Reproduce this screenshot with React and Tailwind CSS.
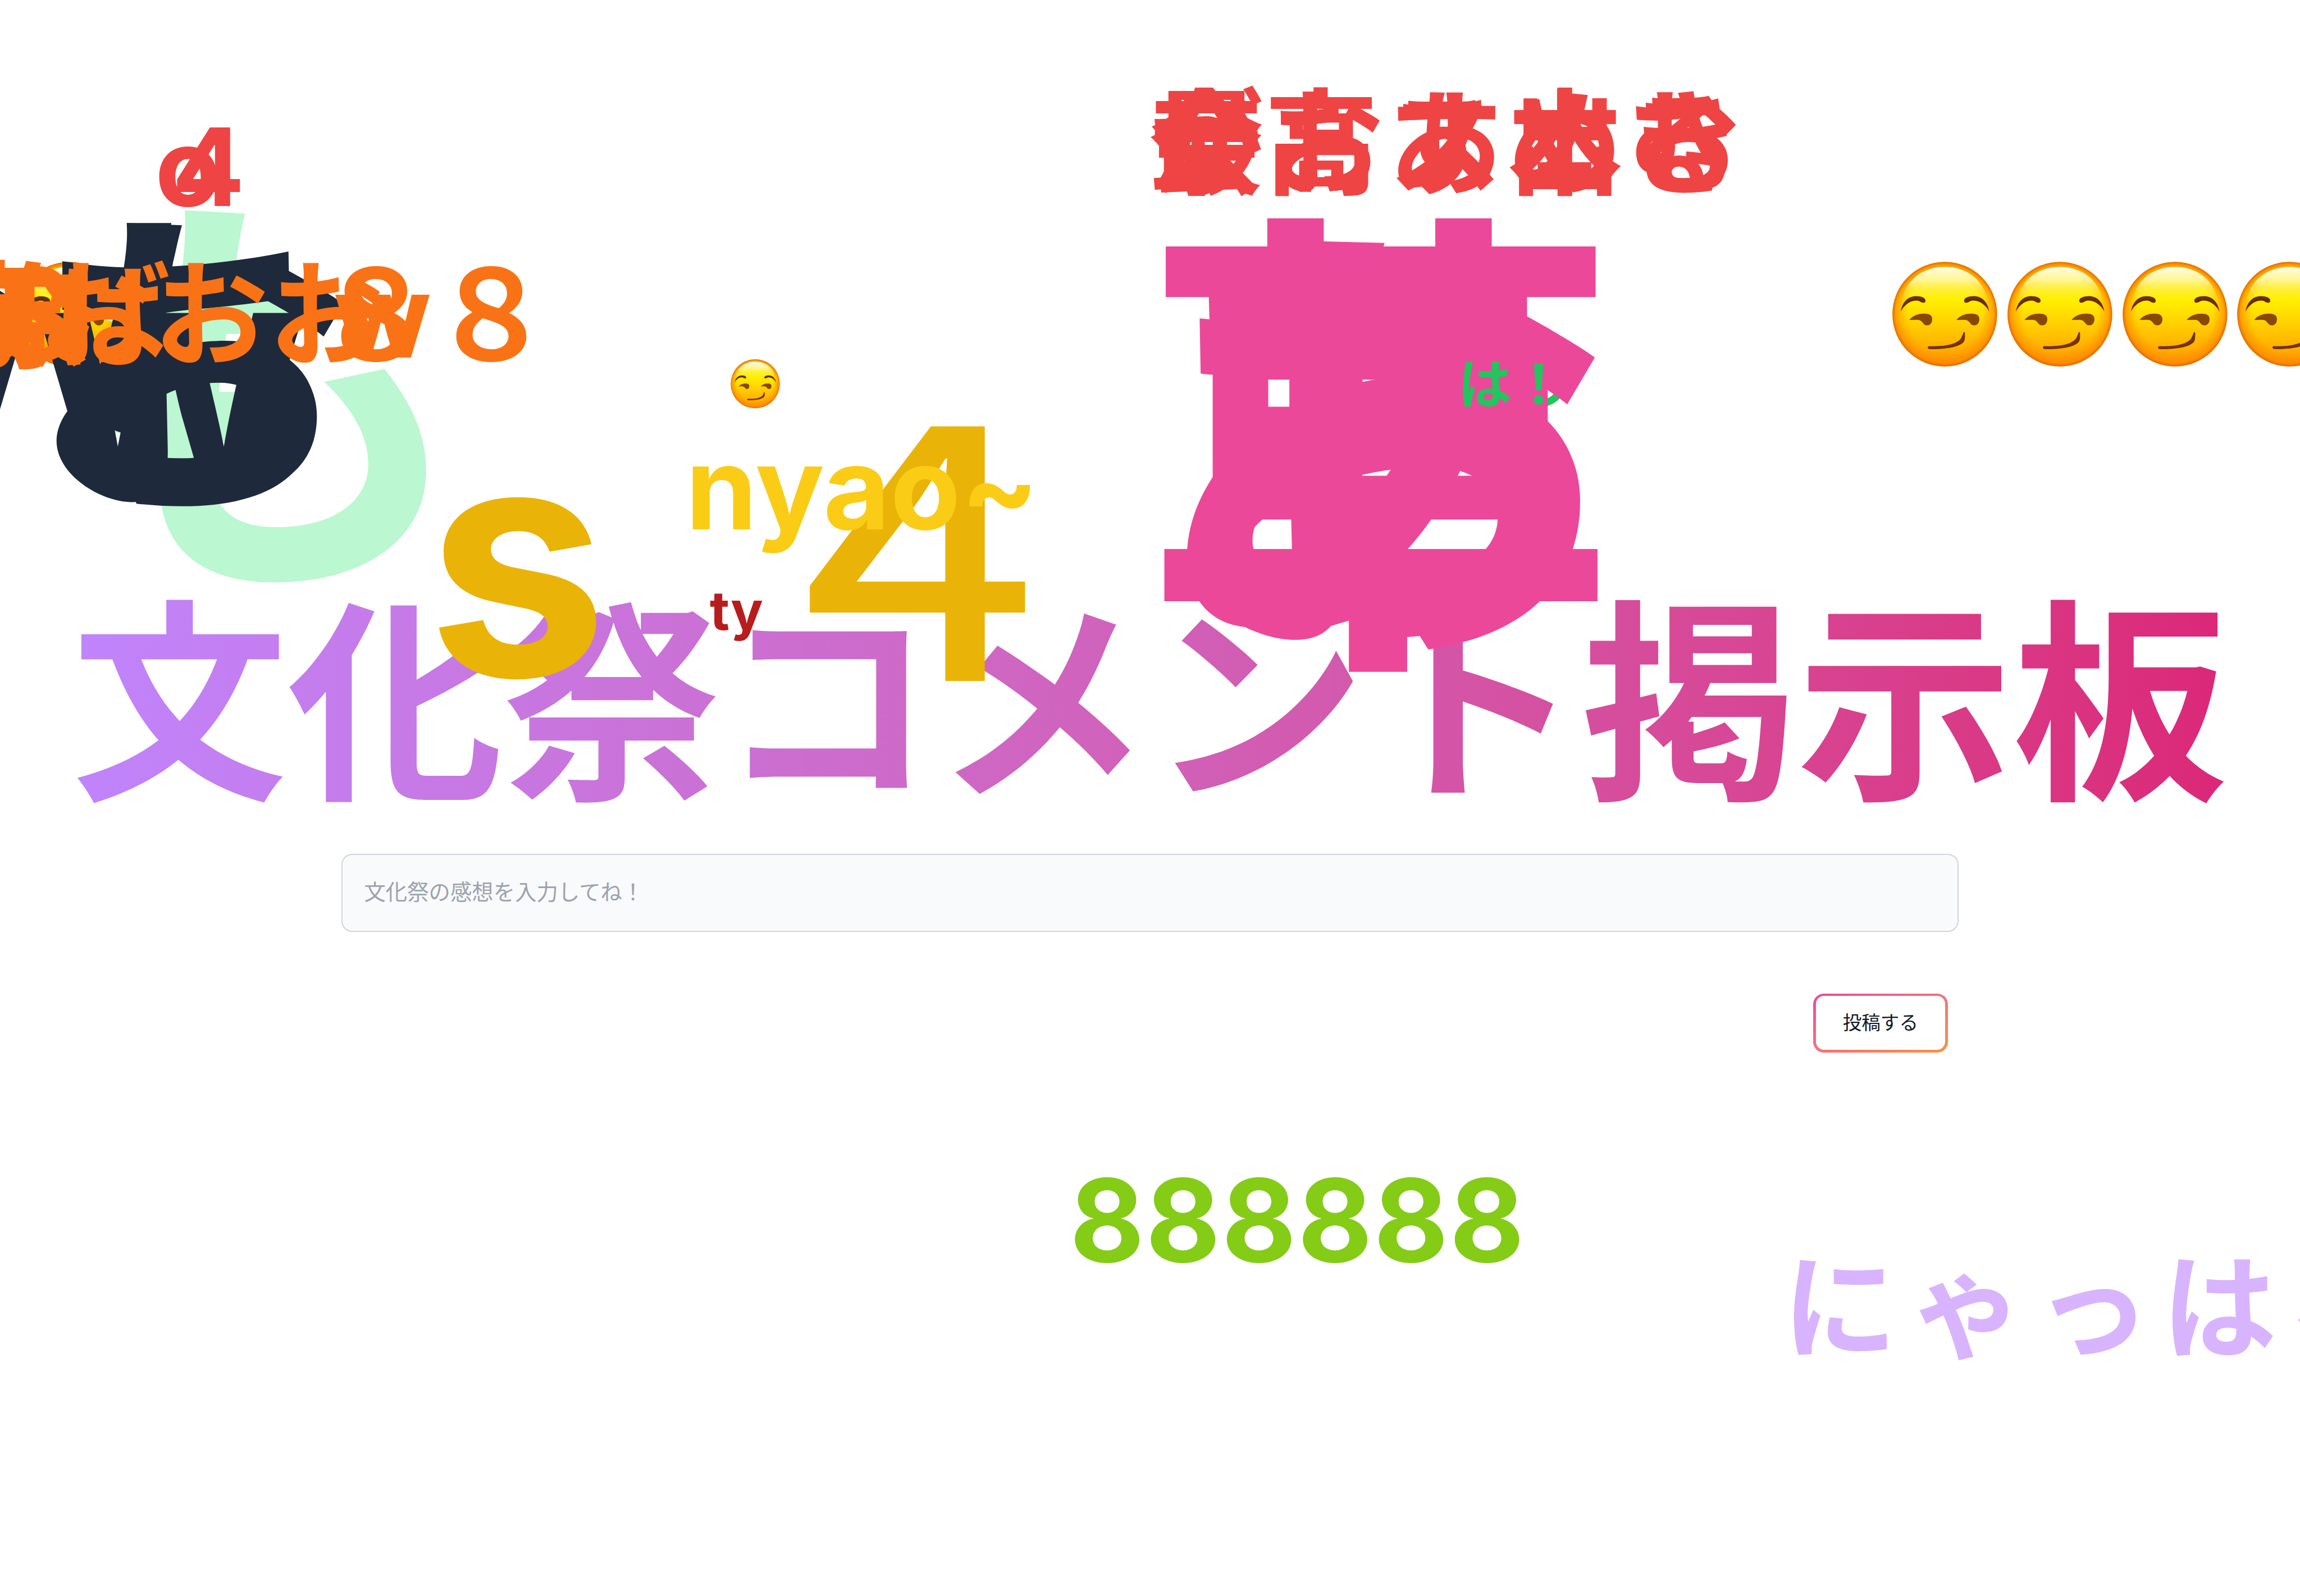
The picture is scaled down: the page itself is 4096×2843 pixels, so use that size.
const JP = "font-['Noto_Sans_CJK_JP',sans-serif]";
const EN = "font-['Inter',sans-serif]";

function Smirk({ className }) {
  return (
    <svg viewBox="0 0 256 256" className={className}>
      <defs>
        <linearGradient id="face" x1="0" y1="0" x2="0" y2="1">
          <stop offset="0" stopColor="#ffd400" />
          <stop offset="0.36" stopColor="#fff000" />
          <stop offset="0.6" stopColor="#ffcf00" />
          <stop offset="1" stopColor="#ff9500" />
        </linearGradient>
        <radialGradient id="rim">
          <stop offset="0.72" stopColor="#ff8a00" stopOpacity="0" />
          <stop offset="0.93" stopColor="#ff8400" stopOpacity="0.65" />
          <stop offset="1" stopColor="#e06400" stopOpacity="0.95" />
        </radialGradient>
        <linearGradient id="shine" x1="0" y1="0" x2="0" y2="1">
          <stop offset="0" stopColor="#fffde8" />
          <stop offset="0.35" stopColor="#fff9a0" stopOpacity="0.9" />
          <stop offset="1" stopColor="#fff000" stopOpacity="0" />
        </linearGradient>
      </defs>
      <circle cx="128" cy="127" r="116.5" fill="url(#face)" />
      <circle cx="128" cy="127" r="116.5" fill="url(#rim)" />
      <path d="M30 106C38 54 76 22 128 22s90 32 98 84c-40-16-156-16-196 0Z" fill="url(#shine)" />
      <path d="M30 121C34 98 48 87 64 87c12 0 22 4 21 11-1 5-8 4-12 1-8-5-30-2-43 22Z" fill="#6b2c00" />
      <path d="M227 121C223 98 209 87 193 87c-12 0-23 4-22 11 1 5 8 4 12 1 8-5 31-2 44 22Z" fill="#6b2c00" />
      <path d="M49 140c8-10 20-14 32-14 13-1 19 4 19 12 0 9-5 14-12 14-9 0-8-10-18-12-8-1-15 0-21 0Z" fill="#8a4700" />
      <path d="M154 140c8-10 20-14 32-14 13-1 19 4 19 12 0 9-5 14-12 14-9 0-8-10-18-12-8-1-15 0-21 0Z" fill="#8a4700" />
      <path d="M94 198c36 2 62-5 70-17 2-4 4-8 5-12 2-4 4-2 4 2 0 8 0 14-3 18-11 12-40 16-75 16-6 0-7-7-1-7Z" fill="#743200" />
    </svg>
  );
}

function Comment({ className, children }) {
  return <span className={`absolute whitespace-nowrap leading-none ${className}`}>{children}</span>;
}

function Comments() {
  return (
    <div className="pointer-events-none absolute inset-0 overflow-hidden">
      <Smirk className="absolute left-[21px] top-[458px] size-[205px]" />
      <Comment className={`${JP} left-[79px] top-[278px] text-[762px] font-bold text-[#bbf7d0]`}>も</Comment>
      <Comment className={`${JP} left-[-522px] top-[326px] text-[576px] font-bold text-[#1e293b]`}>おお</Comment>
      <Comment className={`${JP} left-[54px] top-[326px] text-[576px] font-black text-[#1e293b]`}>ち</Comment>
      <Comment className={`${EN} left-[-430px] top-[375px] text-[576px] font-bold text-[#1e293b]`}>ww</Comment>

      <Comment className={`${JP} left-[-136px] top-[444px] text-[204.8px] font-bold text-[#f97316]`}>おおおお</Comment>
      <Comment className={`${JP} left-[-106px] top-[446px] text-[204.8px] font-bold text-[#f97316]`}>豪ば</Comment>
      <Comment className={`${JP} left-[-36px] top-[448px] text-[204.8px] font-bold text-[#f97316]`}>奈</Comment>
      <Comment className={`${JP} left-[-251px] top-[434px] text-[222px] font-bold tracking-[-17px] text-[#f97316]`}>８８</Comment>
      <Comment className={`${JP} left-[559px] top-[434px] text-[222px] font-bold tracking-[-17px] text-[#f97316]`}>８８</Comment>
      <Comment className={`${EN} left-[594px] top-[461px] text-[204.8px] font-bold text-[#f97316]`}>w</Comment>

      <Comment className={`${EN} left-[306px] top-[201px] text-[192px] font-bold text-[#ef4444]`}>4</Comment>
      <Comment className={`${EN} left-[276px] top-[201px] text-[192px] font-bold text-[#ef4444]`}>o</Comment>

      <Comment className={`${JP} left-[2046px] top-[139px] text-[204.8px] font-bold text-[#ef4444]`}>最高</Comment>
      <Comment className={`${JP} left-[2046px] top-[139px] text-[204.8px] font-bold tracking-[8px] text-[#ef4444]`}>がおすめる</Comment>
      <Comment className={`${JP} left-[2046px] top-[139px] text-[204.8px] font-bold tracking-[8px] text-[#ef4444]`}>奈おス出き</Comment>
      <Comment className={`${JP} left-[2046px] top-[139px] text-[204.8px] font-bold tracking-[8px] text-[#ef4444]`}>会おあ本む</Comment>

      <Comment className={`${JP} left-[2600px] top-[630px] text-[96px] font-bold text-[#22c55e]`}>のの</Comment>
      <Comment className={`${JP} left-[2028px] top-[315px] text-[860px] font-bold text-[#ec4899]`}>草</Comment>
      <Comment className={`${JP} left-[2048px] top-[332px] text-[819.2px] font-black text-[#ec4899]`}>あ</Comment>
      <Comment className={`${JP} left-[2048px] top-[332px] text-[819.2px] font-bold text-[#ec4899]`}>お</Comment>
      <Comment className={`${JP} left-[2596px] top-[630px] text-[96px] font-bold text-[#22c55e]`}>は！</Comment>

      <Comment className={`${EN} left-[760px] top-[707px] text-[576px] font-bold text-[#eab308]`}>s</Comment>
      <Comment className={`${JP} left-[1321px] top-[638px] scale-x-[1.07] text-[614.4px] font-medium text-[#eab308]`}>４</Comment>
      <Comment className={`${EN} left-[1221px] top-[767px] text-[204.8px] font-bold text-[#facc15]`}>nyao~</Comment>
      <Comment className={`${EN} left-[1264px] top-[1039px] text-[96px] font-bold text-[#b91c1c]`}>ty</Comment>
      <Smirk className="absolute left-[1297px] top-[636px] size-[96px]" />

      <div className="absolute left-[3361px] top-[458px] flex">
        <Smirk className="size-[204.8px] shrink-0" />
        <Smirk className="size-[204.8px] shrink-0" />
        <Smirk className="size-[204.8px] shrink-0" />
        <Smirk className="size-[204.8px] shrink-0" />
      </div>

      <Comment className={`${EN} left-[1905px] top-[2072px] text-[204.8px] font-bold tracking-[2px] text-[#84cc16]`}>888888</Comment>
      <Comment className={`${JP} left-[3174px] top-[2213px] text-[204.8px] font-bold tracking-widest text-[#d8b4fe]`}>にゃっはろー</Comment>
    </div>
  );
}

export default function App() {
  return (
    <div className="relative h-[2843px] w-[4096px] overflow-hidden bg-white pt-[998px]">
      <main className={`flex flex-col items-center ${JP}`}>
        <h1 className="bg-gradient-to-r from-[#c084fc] to-[#db2777] bg-clip-text whitespace-nowrap text-[384px] font-bold leading-[1.2] text-transparent">
          文化祭コメント掲示板
        </h1>
        <form className="mt-[62px] flex w-[2880px] flex-col">
          <input
            placeholder="文化祭の感想を入力してね！"
            className="h-[139.2px] rounded-[19.2px] border-[2.4px] border-[#d1d5db] bg-[#f9fafb] px-[38.4px] pb-[8px] text-[38.4px] placeholder:text-[#9ca3af]"
          />
          <button
            type="button"
            className="mt-[109.6px] mr-[19.2px] flex h-[105.6px] w-[240px] self-end rounded-[19.2px] bg-gradient-to-br from-[#ec4899] to-[#fb923c] p-[4.8px]"
          >
            <span className="flex size-full items-center justify-center rounded-[14.4px] bg-white pb-[5px] text-[33.6px] font-normal text-[#111827]">
              投稿する
            </span>
          </button>
        </form>
      </main>
      <Comments />
    </div>
  );
}
